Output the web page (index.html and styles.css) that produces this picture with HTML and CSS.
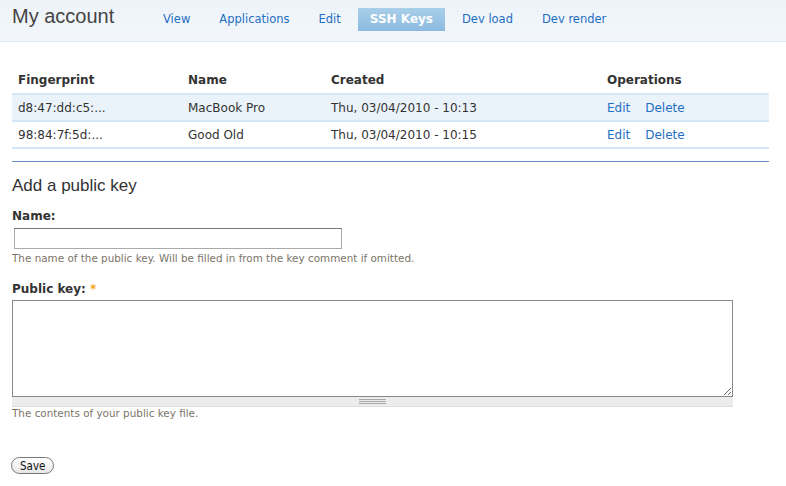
FILE: index.html
```html
<!DOCTYPE html>
<html>
<head>
<meta charset="utf-8">
<link rel="stylesheet" href="styles.css">
</head>
<body>
<header class="top">
  <h1 class="title">My account</h1>
  <ul class="tabs">
    <li><a href="#">View</a></li>
    <li><a href="#">Applications</a></li>
    <li><a href="#">Edit</a></li>
    <li class="active"><a href="#">SSH Keys</a></li>
    <li><a href="#">Dev load</a></li>
    <li><a href="#">Dev render</a></li>
  </ul>
</header>
<main class="content">
  <table class="keys">
    <thead>
      <tr><th class="c1">Fingerprint</th><th class="c2">Name</th><th class="c3">Created</th><th class="c4">Operations</th></tr>
    </thead>
    <tbody>
      <tr class="odd"><td>d8:47:dd:c5:...</td><td>MacBook Pro</td><td>Thu, 03/04/2010 - 10:13</td><td class="ops"><a href="#">Edit</a><a href="#">Delete</a></td></tr>
      <tr class="even"><td>98:84:7f:5d:...</td><td>Good Old</td><td>Thu, 03/04/2010 - 10:15</td><td class="ops"><a href="#">Edit</a><a href="#">Delete</a></td></tr>
    </tbody>
  </table>
  <hr class="sep">
  <h2 class="subtitle">Add a public key</h2>
  <form class="form">
    <div class="item">
      <label class="label">Name:</label>
      <input class="text" type="text">
      <div class="desc">The name of the public key. Will be filled in from the key comment if omitted.</div>
    </div>
    <div class="item item-key">
      <label class="label">Public key: <span class="req">*</span></label>
      <div class="ta-wrap">
        <textarea class="ta"></textarea>
        <div class="grippie"><span class="grip"></span></div>
      </div>
      <div class="desc desc-key">The contents of your public key file.</div>
    </div>
    <button class="save" type="button">Save</button>
  </form>
</main>
</body>
</html>
```
FILE: styles.css
```css
html, body { margin: 0; padding: 0; background: #fff; }
body { font-family: "DejaVu Sans", Verdana, sans-serif; font-size: 12px; color: #333; }
a { color: #1f6fc3; text-decoration: none; }

.top {
  height: 42px;
  box-sizing: border-box;
  border-bottom: 1px solid #dfe8f1;
  background: linear-gradient(#edf3f9, #f3f7fb);
  display: flex;
  align-items: flex-start;
  padding-left: 12px;
}
.title {
  margin: 0;
  font-family: "Liberation Sans", Arial, sans-serif;
  font-weight: normal;
  font-size: 20px;
  color: #444;
  line-height: 20px;
  padding-top: 6px;
  width: 139px;
}
.tabs {
  list-style: none;
  margin: 0;
  padding: 8px 0 0;
  display: flex;
  gap: 5px;
}
.tabs li a {
  display: block;
  height: 23px;
  line-height: 23px;
  padding: 0 12px;
  font-size: 11.5px;
}
.tabs li.active a {
  color: #fff;
  font-weight: bold;
  font-size: 12px;
  background: linear-gradient(#a9cfe9, #8cbadf);
}

.content { padding: 25px 17px 0 12px; }

.keys {
  width: 757px;
  border-collapse: collapse;
  table-layout: fixed;
}
.keys th, .keys td { text-align: left; padding: 0 0 0 6px; height: 25px; }
.keys th { font-weight: bold; color: #333; height: 26px; }
.keys .c1 { width: 164px; }
.keys .c2 { width: 137px; }
.keys .c3 { width: 270px; }
.keys tbody tr { border-top: 2px solid #d4e6f5; }
.keys tbody tr:last-child { border-bottom: 2px solid #d4e6f5; }
.keys tr.odd { background: #ebf3fa; }
.ops a { margin-right: 15px; }

.sep {
  border: 0;
  border-top: 1px solid #6593c1;
  margin: 12px 0 0;
  width: 757px;
}
.subtitle {
  font-family: "Liberation Sans", Arial, sans-serif;
  font-weight: normal;
  font-size: 17px;
  color: #333;
  margin: 14px 0 0;
  line-height: 20px;
}
.form { margin-top: 12px; }
.label { display: block; font-weight: bold; font-size: 12px; line-height: 16px; color: #333; }
.req { color: #f5a623; }
.text {
  display: block;
  margin: 4px 0 0 2px;
  width: 328px;
  height: 21px;
  box-sizing: border-box;
  border: 1px solid #aaa;
  border-top-color: #777;
  padding: 0;
  background: #fff;
}
.desc { font-size: 10.4px; color: #7b7468; margin-top: 3px; line-height: 12px; }
.desc-key { margin-top: 0; }
.item-key { margin-top: 17px; }
.ta-wrap { width: 721px; margin-top: 3px; }
.ta {
  display: block;
  width: 721px;
  height: 97px;
  box-sizing: border-box;
  border: 1px solid #888;
  margin: 0;
  resize: vertical;
  background: #fff;
}
.grippie {
  height: 9px;
  background: #ececec;
  border-bottom: 1px solid #ddd;
  display: flex;
  justify-content: center;
  align-items: center;
}
.grip {
  width: 27px;
  height: 5px;
  border-top: 1px solid #aaa;
  border-bottom: 1px solid #aaa;
  box-sizing: border-box;
  background: linear-gradient(transparent 1px, #aaa 1px, #aaa 2px, transparent 2px);
}
.save {
  margin: 38px 0 0 -1px;
  display: block;
  font-family: "DejaVu Sans Condensed", "DejaVu Sans", sans-serif;
  font-size: 11.5px;
  color: #111;
  height: 17px;
  padding: 0 8px;
  border: 1px solid #777;
  border-radius: 9px;
  background: linear-gradient(#fff, #e6e6e6);
  line-height: 14px;
}
```
